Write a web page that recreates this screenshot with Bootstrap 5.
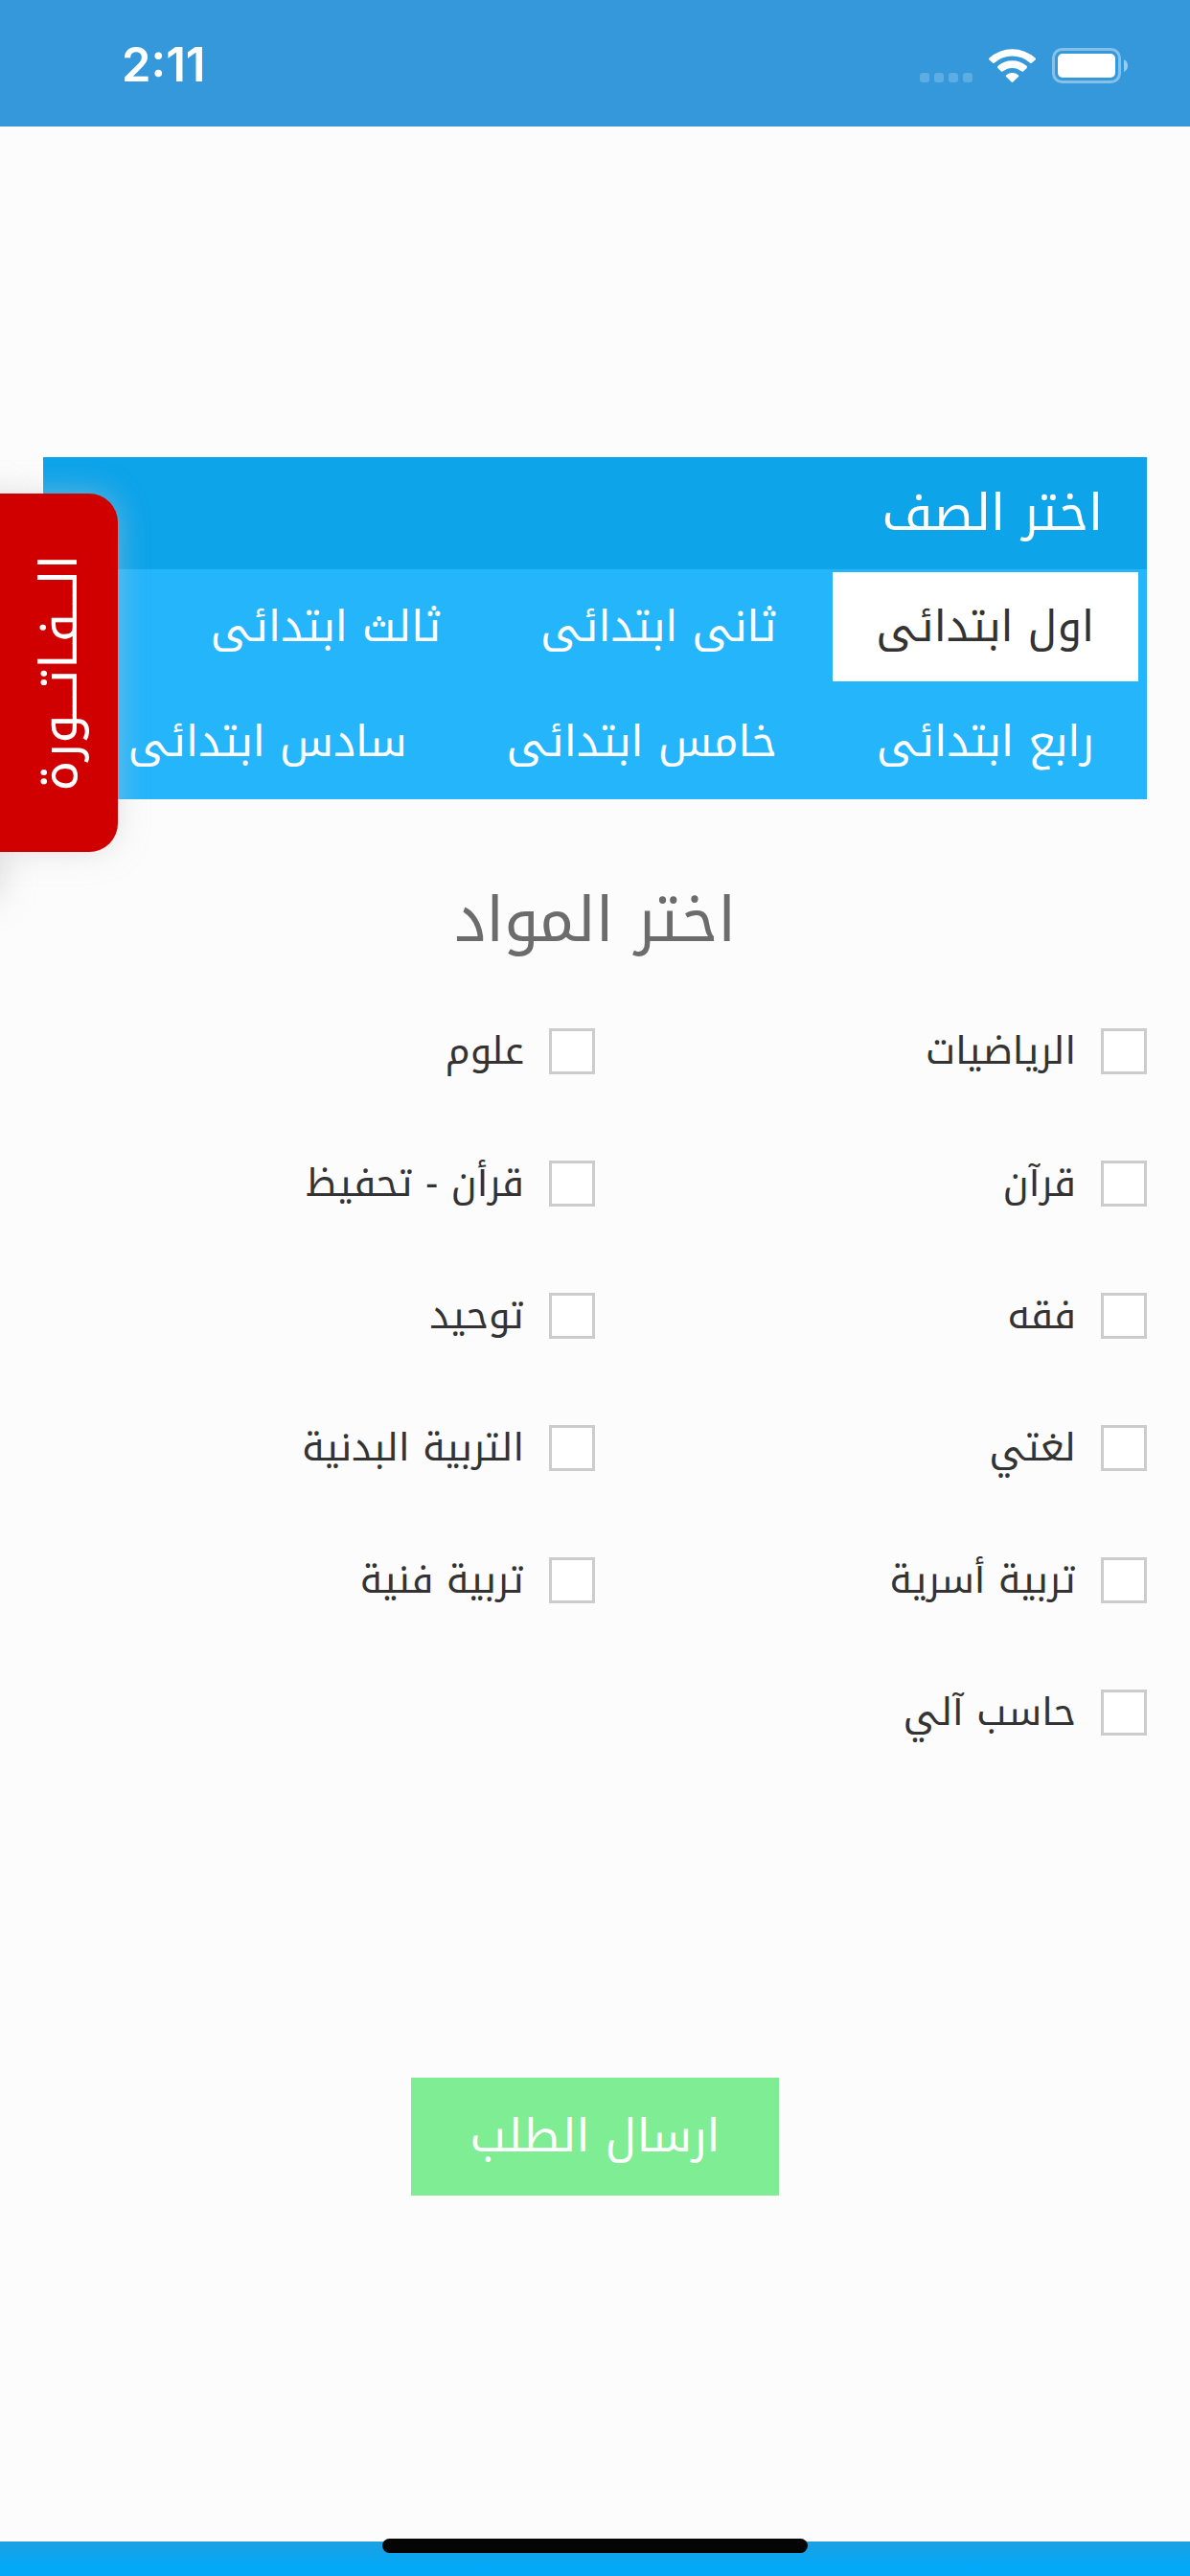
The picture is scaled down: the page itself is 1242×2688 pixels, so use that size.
<!DOCTYPE html>
<html lang="ar" dir="rtl">
<head>
<meta charset="utf-8">
<meta name="viewport" content="width=device-width, initial-scale=1">
<title>اختر الصف</title>
<link href="https://cdn.jsdelivr.net/npm/bootstrap@5.3.0/dist/css/bootstrap.min.css" rel="stylesheet">
<style>
body { background: #fcfcfc; color: #333; font-family: "Noto Kufi Arabic", "Noto Sans", "DejaVu Sans", sans-serif; font-weight: 400; overflow-x: hidden; }
.status-bar { background: #3598db; height: 132px; padding: 3px 65px 0 127px; }
.clock { font-family: Inter, "Liberation Sans", sans-serif; font-weight: 600; font-size: 49px; line-height: 48px; }
.page-body { padding: 345px 45px 0; }
.grade-panel { background: #25b5fb; }
.grade-title { background: #0ea4ea; font-size: 52px; line-height: 117px; padding: 0 46px; }
.grade-list { padding: 3px 9px; gap: 6px 12px; }
.grade-list .nav-link { color: #fff; font-size: 45px; line-height: 114px; padding: 0 46px; border-radius: 0; white-space: nowrap; }
.grade-list .nav-link.active { background: #fff; color: #333; }
.subjects-title { color: #6c6c6c; font-size: 65px; line-height: 90px; padding: 82px 0 67px; font-weight: 400; }
.subject { height: 90px; margin-bottom: 48px; gap: 26px; }
.subject .form-check-input { width: 48px; height: 48px; margin: 0; border: 3px solid #ccc; border-radius: 0; float: none; background-color: #fff; }
.subject .form-check-label { font-size: 40px; line-height: 48px; }
.send-area { padding: 267px 0 0; }
.btn-send { background: #7eed94; color: #fff; border: 0; border-radius: 0; font-size: 48px; line-height: 123px; padding: 0 62px; }
.bottom-bar { height: 36px; background: linear-gradient(#1ba0e1, #03a9f8 75%); }
.home-indicator { width: 444px; height: 15px; border-radius: 8px; background: #050505; top: -3px; }
.invoice-drawer { top: 515px; left: -60px; width: 60px; height: 420px; box-shadow: 0 0 36px rgba(200,200,200,.7); }
.invoice-tab { top: 515px; left: 0; width: 123px; height: 374px; border: 0; border-radius: 0 30px 30px 0; background: #d00000; color: #fff; box-shadow: 0 0 30px rgba(200,200,200,.5); font-size: 54px; line-height: 60px; }
.invoice-tab span { writing-mode: vertical-rl; transform: rotate(180deg); }
</style>
</head>
<body class="d-flex flex-column min-vh-100 position-relative">
<header class="status-bar d-flex align-items-center justify-content-between text-white" dir="ltr">
  <span class="clock">2:11</span>
  <svg width="217" height="38" viewBox="960 48 217 38" aria-hidden="true">
    <g fill="#fff" fill-opacity=".2"><rect x="960" y="75" width="10" height="10" rx="3"/><rect x="975" y="75" width="10" height="10" rx="3"/><rect x="990" y="75" width="10" height="10" rx="3"/><rect x="1005" y="75" width="10" height="10" rx="3"/></g>
    <g fill="#fff"><path d="M1032.500 59.500Q1031.500 60.500 1032.500 61.500L1036 64.500Q1037 65.500 1038 64.500A28 28 0 0 1 1075 64.500Q1076 65.500 1077 64.500L1080.500 61.500Q1081.500 60.500 1080.500 59.500A36 36 0 0 0 1032.500 59.500Z"/><path d="M1041.300 68Q1040.500 69 1041.300 70L1045 73.500Q1046 74 1047 73.300A15 15 0 0 1 1066 73.300Q1067 74 1068 73.500L1071.700 70Q1072.500 69 1071.700 68A23 23 0 0 0 1041.300 68Z"/><path d="M1050 77.500Q1049.300 78.300 1050 79L1055.700 84.500Q1056.500 85.300 1057.300 84.500L1063 79Q1063.700 78.300 1063 77.500A10 10 0 0 0 1050 77.500Z"/></g>
    <rect x="1099.500" y="50.500" width="69" height="34" rx="9" fill="none" stroke="#fff" stroke-opacity=".4" stroke-width="3"/>
    <rect x="1104" y="55" width="60" height="25" rx="5" fill="#fff"/>
    <path d="M1173 61Q1177 63 1177 67.500Q1177 72 1173 74Z" fill="#fff" fill-opacity=".5"/>
  </svg>
</header>

<main class="page-body">
  <section class="grade-panel">
    <div class="grade-title text-white">اختر الصف</div>
    <div class="grade-list nav nav-pills">
      <button type="button" class="nav-link active">اول ابتدائى</button>
      <button type="button" class="nav-link">ثانى ابتدائى</button>
      <button type="button" class="nav-link">ثالث ابتدائى</button>
      <button type="button" class="nav-link">رابع ابتدائى</button>
      <button type="button" class="nav-link">خامس ابتدائى</button>
      <button type="button" class="nav-link">سادس ابتدائى</button>
    </div>
  </section>

  <form>
    <h2 class="subjects-title text-center m-0">اختر المواد</h2>
    <div class="row g-0">
      <div class="col-6"><div class="subject d-flex"><input class="form-check-input" type="checkbox" id="s1"><label class="form-check-label" for="s1">الرياضيات</label></div></div>
      <div class="col-6"><div class="subject d-flex"><input class="form-check-input" type="checkbox" id="s2"><label class="form-check-label" for="s2">علوم</label></div></div>
      <div class="col-6"><div class="subject d-flex"><input class="form-check-input" type="checkbox" id="s3"><label class="form-check-label" for="s3">قرآن</label></div></div>
      <div class="col-6"><div class="subject d-flex"><input class="form-check-input" type="checkbox" id="s4"><label class="form-check-label" for="s4">قرأن - تحفيظ</label></div></div>
      <div class="col-6"><div class="subject d-flex"><input class="form-check-input" type="checkbox" id="s5"><label class="form-check-label" for="s5">فقه</label></div></div>
      <div class="col-6"><div class="subject d-flex"><input class="form-check-input" type="checkbox" id="s6"><label class="form-check-label" for="s6">توحيد</label></div></div>
      <div class="col-6"><div class="subject d-flex"><input class="form-check-input" type="checkbox" id="s7"><label class="form-check-label" for="s7">لغتي</label></div></div>
      <div class="col-6"><div class="subject d-flex"><input class="form-check-input" type="checkbox" id="s8"><label class="form-check-label" for="s8">التربية البدنية</label></div></div>
      <div class="col-6"><div class="subject d-flex"><input class="form-check-input" type="checkbox" id="s9"><label class="form-check-label" for="s9">تربية أسرية</label></div></div>
      <div class="col-6"><div class="subject d-flex"><input class="form-check-input" type="checkbox" id="s10"><label class="form-check-label" for="s10">تربية فنية</label></div></div>
      <div class="col-6"><div class="subject d-flex"><input class="form-check-input" type="checkbox" id="s11"><label class="form-check-label" for="s11">حاسب آلي</label></div></div>
    </div>
    <div class="send-area text-center"><button type="button" class="btn btn-send">ارسال الطلب</button></div>
  </form>
</main>

<div class="invoice-drawer position-absolute"></div>
<button type="button" class="invoice-tab position-absolute d-flex align-items-center justify-content-center p-0"><span>الـــفـاتـــورة</span></button>

<footer class="bottom-bar mt-auto d-flex justify-content-center"><div class="home-indicator position-relative"></div></footer>
<script src="https://cdn.jsdelivr.net/npm/bootstrap@5.3.0/dist/js/bootstrap.bundle.min.js"></script>
</body>
</html>
